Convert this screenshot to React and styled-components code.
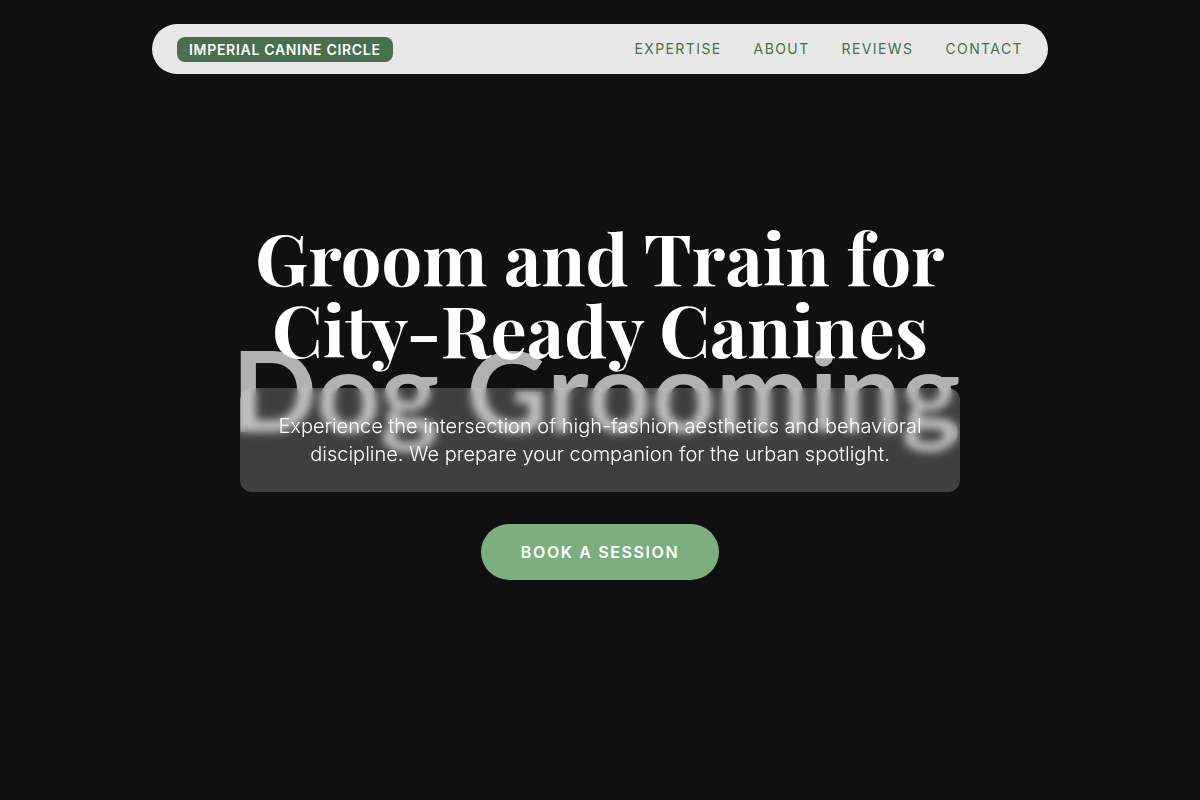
import React from "react";
import styled, { createGlobalStyle } from "styled-components";

const GlobalStyle = createGlobalStyle`
  * {
    box-sizing: border-box;
  }

  body {
    margin: 0;
    background: #101010;
    font-family: Inter, "Liberation Sans", sans-serif;
  }

  h1, p {
    margin: 0;
  }
`;

const Header = styled.header`
  position: fixed;
  top: 24px;
  left: 0;
  right: 0;
  z-index: 10;
  display: flex;
  justify-content: center;
  padding: 0 24px;
`;

const NavBar = styled.nav`
  width: 100%;
  max-width: 896px;
  min-height: 50px;
  display: flex;
  align-items: center;
  justify-content: space-between;
  padding: 12px 25px;
  border-radius: 25px;
  background: #e8e8e8;
`;

const Brand = styled.a`
  padding: 4px 12px;
  border-radius: 8px;
  background: #4a6f4c;
  color: #fff;
  font-size: 14px;
  font-weight: 600;
  line-height: 17px;
  letter-spacing: 0.05em;
  text-decoration: none;
`;

const NavLinks = styled.div`
  display: flex;
  gap: 32px;
`;

const NavLink = styled.a`
  color: #4a6f4c;
  font-size: 14px;
  line-height: 20px;
  letter-spacing: 0.1em;
  text-decoration: none;
`;

const Hero = styled.section`
  position: relative;
  min-height: 100vh;
  display: flex;
  align-items: center;
  justify-content: center;
  padding: 24px;
  overflow: hidden;
`;

const Backdrop = styled.div`
  position: absolute;
  inset: 0;
  display: flex;
  align-items: center;
  justify-content: center;
  padding: 0 8px 22px 0;
  color: #b2b2b2;
  font-family: Lato, sans-serif;
  font-size: 112px;
  font-weight: 700;
  line-height: 144px;
  white-space: nowrap;
`;

const HeroContent = styled.div`
  position: relative;
  width: 100%;
  max-width: 720px;
  display: flex;
  flex-direction: column;
  align-items: center;
  text-align: center;
`;

const Title = styled.h1`
  margin-bottom: 24px;
  color: #fff;
  font-family: "Playfair Display", "Liberation Serif", serif;
  font-size: 72px;
  font-weight: 700;
  line-height: 72px;
`;

const Intro = styled.p`
  width: 100%;
  margin-bottom: 32px;
  padding: 24px;
  border-radius: 12px;
  background: rgba(255, 255, 255, 0.2);
  backdrop-filter: blur(4px);
  color: #fff;
  font-size: 20px;
  font-weight: 300;
  line-height: 28px;
`;

const BookButton = styled.button`
  padding: 16px 40px;
  border: none;
  border-radius: 28px;
  background: #7dae80;
  color: #fff;
  font-family: inherit;
  font-size: 16px;
  font-weight: 600;
  line-height: 24px;
  letter-spacing: 0.1em;
  cursor: pointer;
`;

const links = ["Expertise", "About", "Reviews", "Contact"];

const App = () => {
  return (
    <>
      <GlobalStyle />
      <Header>
        <NavBar>
          <Brand href="#top">IMPERIAL CANINE CIRCLE</Brand>
          <NavLinks>
            {links.map((link) => (
              <NavLink key={link} href={`#${link.toLowerCase()}`}>
                {link.toUpperCase()}
              </NavLink>
            ))}
          </NavLinks>
        </NavBar>
      </Header>
      <Hero id="top">
        <Backdrop aria-hidden="true">Dog Grooming</Backdrop>
        <HeroContent>
          <Title>Groom and Train for City-Ready Canines</Title>
          <Intro>
            Experience the intersection of high-fashion aesthetics and
            behavioral discipline. We prepare your companion for the urban
            spotlight.
          </Intro>
          <BookButton type="button">BOOK A SESSION</BookButton>
        </HeroContent>
      </Hero>
    </>
  );
};

export default App;
